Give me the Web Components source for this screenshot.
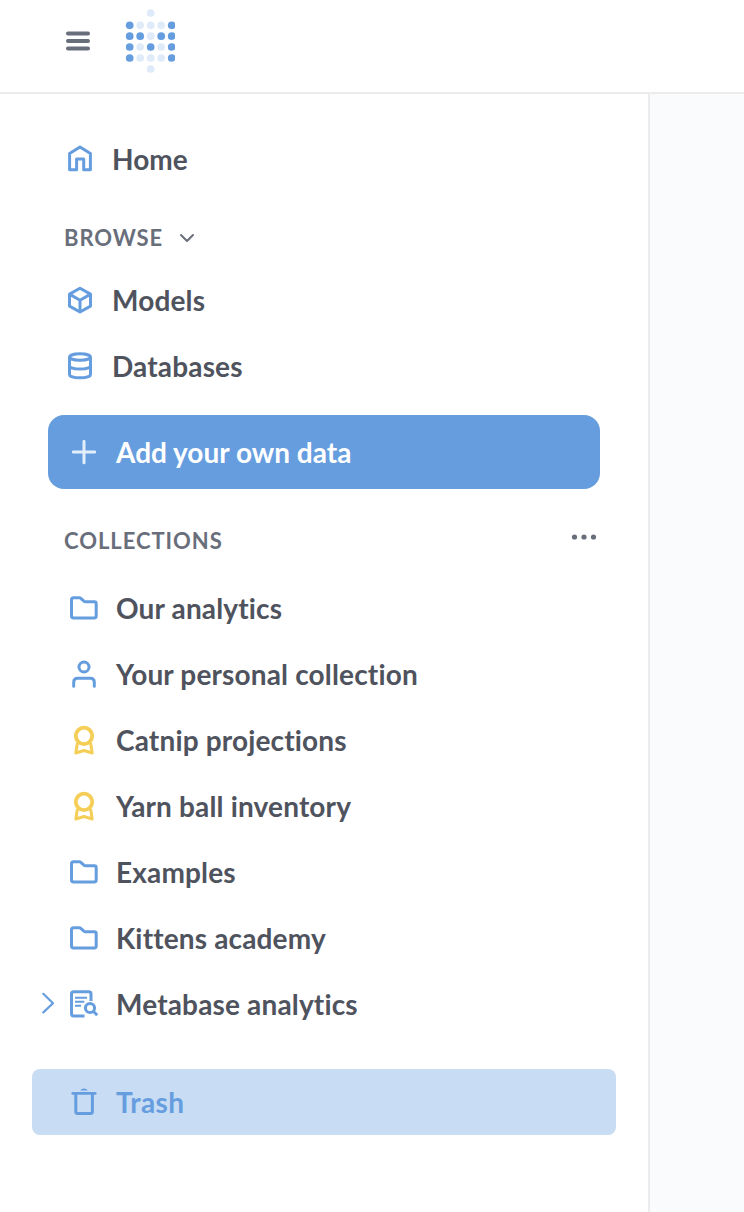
<!DOCTYPE html>
<html lang="en">
<head>
<meta charset="utf-8">
<title>Trash</title>
<style>
html, body { margin: 0; height: 100%; background: #fff; }
body { font-family: Lato, "Liberation Sans", sans-serif; font-variant-ligatures: none; overflow: hidden; }
</style>
</head>
<body>
<app-shell>
  <app-header slot="header"></app-header>
  <side-bar slot="sidebar">
    <nav-item icon="home">Home</nav-item>
    <nav-heading kind="browse">BROWSE</nav-heading>
    <nav-item icon="model">Models</nav-item>
    <nav-item icon="database">Databases</nav-item>
    <add-button>Add your own data</add-button>
    <nav-heading kind="collections">COLLECTIONS</nav-heading>
    <nav-item nested icon="folder">Our analytics</nav-item>
    <nav-item nested icon="person">Your personal collection</nav-item>
    <nav-item nested icon="badge">Catnip projections</nav-item>
    <nav-item nested icon="badge">Yarn ball inventory</nav-item>
    <nav-item nested icon="folder">Examples</nav-item>
    <nav-item nested icon="folder">Kittens academy</nav-item>
    <nav-item nested expandable icon="audit">Metabase analytics</nav-item>
    <nav-item nested selected icon="trash">Trash</nav-item>
  </side-bar>
</app-shell>
<script>
const shapes = {
  home: '<path d="M5.6 26.7V10.6L16 3.9l10.4 6.7v16.1h-6.7V16.1h-7.1v10.6z"/>',
  model: '<path d="M16 4.2l10.5 5.9v12L16 28 5.500 22.100v-12z"/><path d="M5.500 10.100L16 16.200l10.500-6.100M16 16.200V28"/>',
  database: '<ellipse cx="16" cy="7" rx="10.500" ry="3.200"/><path d="M5.500 7.300v17.200c0 1.900 4.700 3.300 10.500 3.300s10.500-1.400 10.500-3.300V7.300M5.500 15.700c0 1.900 4.700 3.300 10.500 3.300s10.500-1.400 10.500-3.300"/>',
  plus: '<path d="M16 5.300v21.400M5.300 16h21.400" stroke-linecap="round"/>',
  folder: '<path d="M5.400 5.800h6q.8 0 1.400.5l3.100 2.900q.6.500 1.400.5h9q1.900 0 1.900 1.900v12.500q0 1.900-1.900 1.900H5.400q-1.900 0-1.900-1.900V7.700q0-1.900 1.900-1.900z"/>',
  person: '<circle cx="16" cy="9" r="5"/><path d="M5.700 28.300v-4.100q0-4 4-4h12.600q4 0 4 4v4.100" stroke-linecap="round"/>',
  badge: '<circle cx="16" cy="11.900" r="8.200" stroke-width="3.800"/><path d="M9.400 19L7.800 29 16 26.500l8.200 2.500L22.600 19" stroke-width="3"/>',
  audit: '<path d="M16.500 28H5.700q-2.200 0-2.200-2.200V6q0-2.200 2.200-2.200h15.100Q23 3.800 23 6v7"/><path d="M7 9.700h12M7 13.700h9.300M7 17.700h6" stroke-width="2"/><circle cx="22" cy="20" r="4.600"/><path d="M25.300 23.300l3.900 3.900"/>',
  trash: '<path d="M4.700 7.400h22.600" stroke-linecap="round" stroke-width="2.600"/><path d="M7.800 8v17.500q0 2 2 2h12.600q2 0 2-2V8"/><path d="M12.200 4.500Q13.500 2.600 16 2.600t3.800 1.900z" fill="currentColor" stroke="none"/>'
};

function define(name, html, setup) {
  const template = document.createElement('template');
  template.innerHTML = html;
  customElements.define(name, class extends HTMLElement {
    connectedCallback() {
      if (this.shadowRoot) return;
      const root = this.attachShadow({ mode: 'open' });
      root.append(template.content.cloneNode(true));
      if (setup) setup(this, root);
    }
  });
}

define('ui-icon', `
<style>
:host { display: block; width: 32px; height: 32px; flex: none; }
svg { display: block; overflow: visible; }
</style>
<svg width="32" height="32" viewBox="0 0 32 32" fill="none" stroke="currentColor" stroke-width="3" stroke-linejoin="round"></svg>`,
(host, root) => { root.querySelector('svg').innerHTML = shapes[host.getAttribute('name')]; });

define('brand-logo', `
<style>:host { display: block; width: 50px; height: 64px; } svg { display: block; }</style>
<svg width="50" height="64" viewBox="0 0 50 64"></svg>`,
(host, root) => {
  const rows = [[4, '  o  '], [16.3, '#ooo#'], [27.2, '##o##'], [38, '#o#o#'], [49, '#ooo#'], [60, '  o  ']];
  root.querySelector('svg').innerHTML = rows.map(([y, row]) => [...row].map((c, i) =>
    c === ' ' ? '' : `<circle cx="${4.7 + i * 10.500}" cy="${y}" r="3.850" fill="${c === '#' ? '#659ddf' : '#dfebf9'}"/>`).join('')).join('');
});

define('app-header', `
<style>
:host { display: flex; box-sizing: border-box; height: 94px; padding: 9px 0 0 66px; gap: 35px; border-bottom: 2px solid #ececec; background: #fff; }
.menu { display: block; margin-top: 22px; }
</style>
<svg class="menu" width="24" height="20" viewBox="0 0 24 20" stroke="#696e7b" stroke-width="3.800" stroke-linecap="round"><path d="M1.900 2.500h20.200M1.900 10h20.200M1.900 17.500h20.200"/></svg>
<brand-logo></brand-logo>`);

define('app-shell', `
<style>
:host { display: grid; grid-template: 94px 1fr / 650px 1fr; height: 100vh; }
slot[name=header] { display: block; grid-column: 1 / 3; }
slot[name=sidebar] { display: block; min-height: 0; }
main { background: #f9fbfd; }
</style>
<slot name="header"></slot><slot name="sidebar"></slot><main></main>`);

define('side-bar', `
<style>
:host { display: flex; flex-direction: column; box-sizing: border-box; height: 100%; padding: 32px 32px 0; border-right: 2px solid #ececec; background: #fff; }
</style>
<slot></slot>`);

define('nav-item', `
<style>
:host { display: flex; align-items: center; box-sizing: border-box; flex: none; height: 66px; padding-left: 32px; gap: 16px; font-size: 28px; font-weight: 700; letter-spacing: .16px; line-height: 34px; color: #4f535e; border-radius: 8px; }
:host([nested]) { padding-left: 36px; }
:host([expandable]) { padding-left: 8px; gap: 0; }
:host([expandable]) ui-icon { margin: 0 16px 0 12px; }
:host([selected]) { margin-top: 32px; background: #c8dcf3; color: #659ddf; letter-spacing: .35px; }
:host([icon=home]) { letter-spacing: 0; }
ui-icon { color: #659ddf; }
:host([icon=badge]) ui-icon { color: #f4ce56; }
.label { white-space: nowrap; }
.chevron { display: none; }
:host([expandable]) .chevron { display: block; width: 16px; height: 22px; margin-top: -2px; }
</style>
<svg class="chevron" viewBox="0 0 16 22" fill="none" stroke="#659ddf" stroke-width="2.200" stroke-linecap="round" stroke-linejoin="round"><path d="M3.300 1.800L13 11.200l-9.700 9.200"/></svg>
<span class="label"><slot></slot></span>`,
(host, root) => {
  const icon = document.createElement('ui-icon');
  icon.setAttribute('name', host.getAttribute('icon'));
  root.querySelector('.label').before(icon);
});

define('nav-heading', `
<style>
:host { display: flex; align-items: center; flex: none; box-sizing: border-box; height: 75px; padding: 16px 19px 0 32px; font-size: 22px; font-weight: 700; letter-spacing: .95px; line-height: 28px; color: #696e7b; }
:host([kind=collections]) { height: 86px; justify-content: space-between; padding-top: 18px; }
svg { display: none; }
:host([kind=browse]) .down { display: block; margin-left: 16px; }
:host([kind=collections]) .more { display: block; margin-top: -9px; }
</style>
<span><slot></slot></span>
<svg class="down" width="16" height="10" viewBox="0 0 16 10" fill="none" stroke="#696e7b" stroke-width="2" stroke-linecap="round" stroke-linejoin="round"><path d="M2 2l6 6 6-6"/></svg>
<svg class="more" width="26" height="6" viewBox="0 0 26 6" fill="#696e7b"><circle cx="3.500" cy="3" r="2.600"/><circle cx="13" cy="3" r="2.600"/><circle cx="22.500" cy="3" r="2.600"/></svg>`);

define('add-button', `
<style>
:host { display: flex; align-items: center; flex: none; box-sizing: border-box; height: 74px; margin: 16px 16px 0; padding-left: 20px; gap: 16px; background: #659ddf; border-radius: 16px; color: #fff; font-size: 28px; font-weight: 700; line-height: 34px; }
ui-icon { color: #e3eefa; }
</style>
<ui-icon name="plus"></ui-icon><span><slot></slot></span>`);
</script>
</body>
</html>
